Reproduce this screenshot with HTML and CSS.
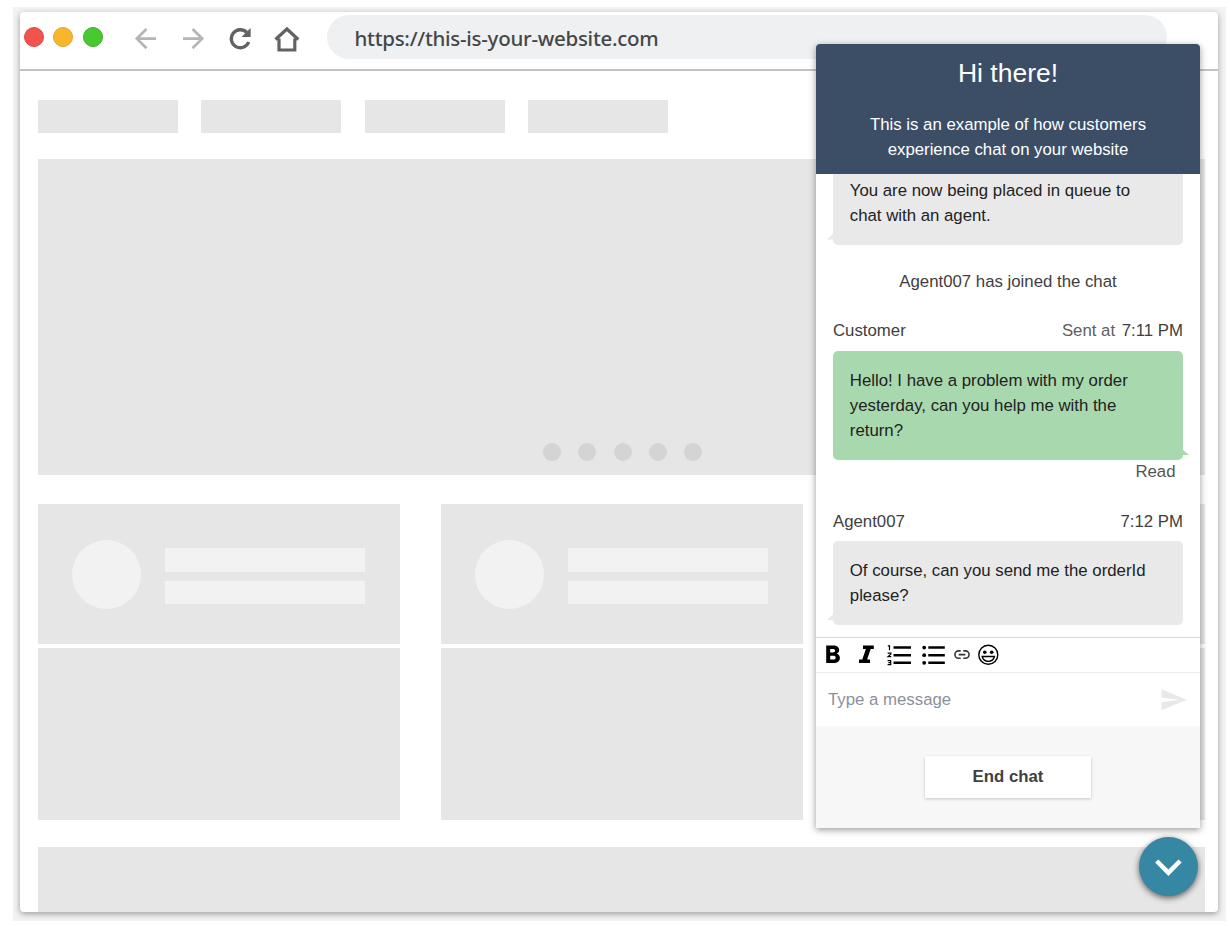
FILE: index.html
```html
<!DOCTYPE html>
<html lang="en">
<head>
<meta charset="utf-8">
<title>Chat widget preview</title>
<link rel="stylesheet" href="styles.css">
</head>
<body>
<div class="stage">
  <div class="window">
    <header class="browser-bar">
      <div class="lights"><span class="light red"></span><span class="light amber"></span><span class="light green"></span></div>
      <svg class="nav-icons" width="180" height="40" viewBox="0 0 180 40" fill="none">
        <g stroke="#b4b5b5" stroke-width="2.700">
          <path d="M26 18.600H6.500M16.500 9L6.800 18.600L16.500 28.200"/>
          <path d="M53 18.600H72.500M62.500 9L72.200 18.600L62.500 28.200"/>
        </g>
        <path d="M118.700 22A9 9 0 1 1 116.800 12.500" stroke="#606263" stroke-width="3.300"/>
        <path d="M120.600 8V17H111.500Z" fill="#606263"/>
        <path d="M149 18.600V30H164.800V18.600M145.500 19.500L156.900 9L168.300 19.500" stroke="#606263" stroke-width="3.200"/>
      </svg>
      <div class="address">https://this-is-your-website.com</div>
    </header>
    <main class="wireframe">
      <nav class="tabs"><span></span><span></span><span></span><span></span></nav>
      <section class="hero"><i></i><i></i><i></i><i></i><i></i></section>
      <section class="cards">
        <article class="card"><div class="card-head"><span class="avatar"></span><div class="lines"><span></span><span></span></div></div><div class="card-body"></div></article>
        <article class="card"><div class="card-head"><span class="avatar"></span><div class="lines"><span></span><span></span></div></div><div class="card-body"></div></article>
        <article class="card"><div class="card-head"></div><div class="card-body"></div></article>
      </section>
      <section class="strip"></section>
    </main>
  </div>

  <aside class="chat">
    <header class="chat-header">
      <h1>Hi there!</h1>
      <p>This is an example of how customers<br>experience chat on your website</p>
    </header>
    <div class="messages">
      <div class="bubble agent clipped">You are now being placed in queue to<br>chat with an agent.</div>
      <p class="event">Agent007 has joined the chat</p>
      <div class="meta"><span>Customer</span><span><span class="soft">Sent at</span> <span class="time">7:11 PM</span></span></div>
      <div class="bubble customer">Hello! I have a problem with my order<br>yesterday, can you help me with the<br>return?</div>
      <div class="receipt">Read</div>
      <div class="meta"><span>Agent007</span><span>7:12 PM</span></div>
      <div class="bubble agent">Of course, can you send me the orderId<br>please?</div>
    </div>
    <div class="toolbar">
      <svg width="190" height="34" viewBox="0 0 190 34" fill="none" stroke="#000">
        <path fill="#000" stroke="none" fill-rule="evenodd" d="M10.200 7.500H17.200C21 7.500 23.200 9.400 23.200 12.100C23.200 13.900 22.200 15.200 20.700 15.800C22.700 16.400 23.900 17.900 23.900 20C23.900 23.100 21.500 25 17.500 25H10.200ZM14.200 11V14.400H16.600C18.200 14.400 19.100 13.800 19.100 12.700C19.100 11.500 18.200 11 16.600 11ZM14.200 17.800V21.600H17C18.700 21.600 19.700 21 19.700 19.700C19.700 18.400 18.700 17.800 17 17.800Z"/>
        <path fill="#000" stroke="none" d="M47 7.500H57.800V10.900H54.700L51.100 21.600H54V25H43V21.600H46.300L49.900 10.900H47Z"/>
        <path stroke-width="2.500" d="M77.500 9.600H95M77.500 17.200H95M77.500 24.800H95M112.300 9.600H128.800M112.300 17.200H128.800M112.300 24.800H128.800"/>
        <path stroke-width="1.200" d="M71.800 7.900H73.500V12.300M71.600 15.200H74.900V16.100L72 18.700H75.300M71.600 22.600H74.700V26.700H71.600M72.400 24.600H74.700"/>
        <g fill="#000" stroke="none"><circle cx="108.200" cy="9.600" r="1.900"/><circle cx="108.200" cy="17.200" r="1.900"/><circle cx="108.200" cy="24.800" r="1.900"/></g>
        <path stroke="#333" stroke-width="1.600" d="M144.700 12.900H142.600A3.700 3.700 0 0 0 142.600 20.300H144.700M147.300 12.900H149.400A3.700 3.700 0 0 1 149.400 20.300H147.300M142.700 16.600H149.300"/>
        <circle cx="172.300" cy="16.700" r="9.500" stroke-width="1.400"/>
        <circle cx="168.800" cy="14.200" r="1.800" fill="#000" stroke="none"/><circle cx="175.700" cy="14.200" r="1.800" fill="#000" stroke="none"/>
        <path stroke-width="1.400" d="M166.200 18.500H178.400C177.600 21.700 175.300 23.400 172.300 23.400S167 21.700 166.200 18.500Z"/>
      </svg>
    </div>
    <div class="composer">
      <span>Type a message</span>
      <svg width="26" height="22" viewBox="0 0 26 22"><path fill="#e8e8e8" d="M.5 .3L25.700 10.800L.5 21.300V13.200L18.500 10.800L.5 8.400Z"/></svg>
    </div>
    <footer class="chat-footer"><button class="end">End chat</button></footer>
  </aside>

  <button class="toggle" aria-label="Minimize chat">
    <svg width="59" height="59" viewBox="0 0 59 59"><path d="M17.700 24L29.400 35.700L41.100 24" fill="none" stroke="#fff" stroke-width="4.500"/></svg>
  </button>
</div>
</body>
</html>
```

FILE: styles.css
```css
* { box-sizing: border-box; }
body {
  margin: 0;
  width: 1230px;
  height: 926px;
  padding: 7px 4px 5px 13px;
  overflow: hidden;
  background: #fff;
  font-family: "Liberation Sans", Arial, sans-serif;
}
h1, p { margin: 0; font-weight: 400; }
button { border: 0; padding: 0; font-family: inherit; }
svg { display: block; flex: none; }

.stage {
  position: relative;
  height: 914px;
  padding: 5px 8px 9px 7px;
  background: #f3f3f3;
  overflow: hidden;
}
.window {
  height: 900px;
  border-radius: 4px;
  background: #fff;
  box-shadow: 0 2px 6px rgba(0, 0, 0, .36);
  overflow: hidden;
}
.browser-bar {
  display: flex;
  height: 59px;
  border-bottom: 2px solid #c3c3c3;
}
.lights { display: flex; gap: 9.500px; padding: 15px 0 0 3.600px; }
.light { width: 20px; height: 20px; border-radius: 50%; border: 1px solid; }
.red { background: #f0544c; border-color: #e04a48; }
.amber { background: #f8b62d; border-color: #e5a12c; }
.green { background: #48c930; border-color: #3ab02b; }
.nav-icons { margin: 8px 0 0 27.400px; }
.address {
  width: 840px;
  height: 44px;
  margin: 3px 0 0 17px;
  padding-left: 27.500px;
  border-radius: 22px;
  background: #eff0f2;
  color: #454747;
  font: 500 20.500px/46px "Noto Sans", sans-serif;
  letter-spacing: -.27px;
  white-space: nowrap;
}

.wireframe { padding: 29px 13px 0 18px; }
.tabs { display: flex; gap: 23.400px; }
.tabs span { width: 140px; height: 33px; background: #e6e6e6; }
.hero {
  display: flex;
  justify-content: center;
  align-items: flex-end;
  gap: 17.400px;
  height: 316px;
  margin-top: 26px;
  padding: 0 0 14.500px 2px;
  background: #e6e6e6;
}
.hero i { width: 18px; height: 18px; border-radius: 50%; background: #d4d4d4; }
.cards { display: flex; gap: 41.300px; margin-top: 29.300px; }
.card { width: 362px; flex: none; }
.card:last-child { width: 360px; }
.card-head {
  display: flex;
  align-items: center;
  gap: 24px;
  height: 139.700px;
  padding-left: 34px;
  background: #e6e6e6;
}
.avatar { width: 69px; height: 69px; border-radius: 50%; background: #f2f2f2; }
.lines { display: grid; gap: 9px; padding-top: 4px; }
.lines span { width: 200px; height: 23.500px; background: #f2f2f2; }
.card-body { height: 172px; margin-top: 4.500px; background: #e6e6e6; }
.strip { height: 65px; margin-top: 26.500px; background: #e6e6e6; }

.chat {
  position: absolute;
  left: 803px;
  top: 36.500px;
  width: 384px;
  height: 784.500px;
  border-radius: 4px 4px 0 0;
  background: #fff;
  box-shadow: 0 2px 7px rgba(0, 0, 0, .4);
  font-size: 16.800px;
  line-height: 25.200px;
  color: #222;
  display: flex;
  flex-direction: column;
}
.chat-header {
  height: 130.500px;
  padding-top: 12px;
  border-radius: 4px 4px 0 0;
  background: #3c4d66;
  color: #fff;
  text-align: center;
}
.chat-header h1 { font-size: 26.500px; line-height: 34px; }
.chat-header p { margin-top: 22.500px; }
.messages { height: 463px; padding: 0 17px; overflow: hidden; }
.bubble {
  position: relative;
  padding: 16.800px;
  border-radius: 5px;
  white-space: nowrap;
}
.bubble::after {
  content: "";
  position: absolute;
  bottom: 5px;
  width: 7px;
  height: 6px;
}
.agent { background: #e9e9e9; }
.agent::after { left: -6.500px; background: #e9e9e9; clip-path: polygon(100% 0, 100% 100%, 0 100%); }
.customer { background: #a8d8ad; }
.customer::after { right: -6px; background: #a8d8ad; clip-path: polygon(0 0, 100% 100%, 0 100%); }
.clipped { height: 70.500px; padding-top: 4px; border-radius: 0 0 5px 5px; }
.event { margin-top: 24px; text-align: center; color: #404040; }
.meta { display: flex; justify-content: space-between; margin: 24.500px 0 7.500px; color: #404040; }
.soft { color: #606060; }
.time { margin-left: 2px; }
.receipt { padding-right: 7.500px; text-align: right; line-height: 24px; color: #555; }
.toolbar { height: 36px; border-top: 1px solid #d8d8d8; border-bottom: 1px solid #ebebeb; }
.composer {
  display: flex;
  align-items: center;
  justify-content: space-between;
  height: 53px;
  padding: 0 13px 0 12px;
  color: #8c909c;
}
.chat-footer { display: flex; justify-content: center; flex: 1; padding-top: 30px; background: #f7f7f7; }
.end {
  width: 166px;
  height: 42px;
  background: #fff;
  box-shadow: 0 1px 3px rgba(0, 0, 0, .2);
  color: #404040;
  font-size: 16.800px;
  font-weight: 700;
}
.toggle {
  position: absolute;
  left: 1125.500px;
  top: 830px;
  width: 59px;
  height: 59px;
  border-radius: 50%;
  background: #3587a4;
  box-shadow: 0 2px 6px rgba(0, 0, 0, .6);
}
```
